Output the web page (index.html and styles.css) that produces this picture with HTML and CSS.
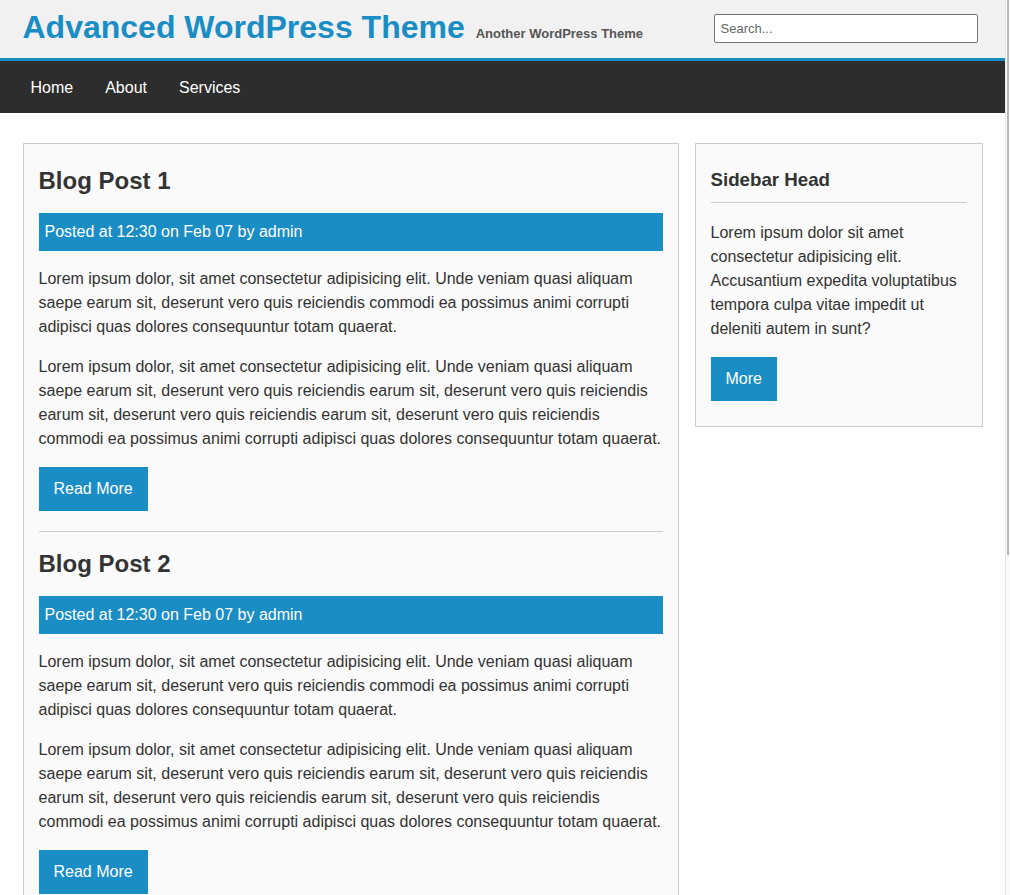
FILE: index.html
```html
<!DOCTYPE html>
<html lang="en">
<head>
<meta charset="utf-8">
<title>Advanced WordPress Theme</title>
<link rel="stylesheet" href="styles.css">
</head>
<body>
<header class="site-header">
  <div class="container header-inner">
    <div class="branding">
      <h1 class="site-title">Advanced WordPress Theme</h1>
      <span class="tagline">Another WordPress Theme</span>
    </div>
    <input class="search" type="text" placeholder="Search...">
  </div>
</header>
<nav class="site-nav">
  <div class="container">
    <ul class="menu">
      <li><a href="#">Home</a></li>
      <li><a href="#">About</a></li>
      <li><a href="#">Services</a></li>
    </ul>
  </div>
</nav>
<div class="container layout">
  <main class="main-box">
    <article class="post">
      <h2 class="post-title">Blog Post 1</h2>
      <div class="meta">Posted at 12:30 on Feb 07 by admin</div>
      <p>Lorem ipsum dolor, sit amet consectetur adipisicing elit. Unde veniam quasi aliquam saepe earum sit, deserunt vero quis reiciendis commodi ea possimus animi corrupti adipisci quas dolores consequuntur totam quaerat.</p>
      <p>Lorem ipsum dolor, sit amet consectetur adipisicing elit. Unde veniam quasi aliquam saepe earum sit, deserunt vero quis reiciendis earum sit, deserunt vero quis reiciendis earum sit, deserunt vero quis reiciendis earum sit, deserunt vero quis reiciendis commodi ea possimus animi corrupti adipisci quas dolores consequuntur totam quaerat.</p>
      <a class="btn" href="#">Read More</a>
    </article>
    <article class="post">
      <h2 class="post-title">Blog Post 2</h2>
      <div class="meta">Posted at 12:30 on Feb 07 by admin</div>
      <p>Lorem ipsum dolor, sit amet consectetur adipisicing elit. Unde veniam quasi aliquam saepe earum sit, deserunt vero quis reiciendis commodi ea possimus animi corrupti adipisci quas dolores consequuntur totam quaerat.</p>
      <p>Lorem ipsum dolor, sit amet consectetur adipisicing elit. Unde veniam quasi aliquam saepe earum sit, deserunt vero quis reiciendis earum sit, deserunt vero quis reiciendis earum sit, deserunt vero quis reiciendis earum sit, deserunt vero quis reiciendis commodi ea possimus animi corrupti adipisci quas dolores consequuntur totam quaerat.</p>
      <a class="btn" href="#">Read More</a>
    </article>
  </main>
  <aside class="sidebar">
    <h3 class="sidebar-head">Sidebar Head</h3>
    <p>Lorem ipsum dolor sit amet consectetur adipisicing elit. Accusantium expedita voluptatibus tempora culpa vitae impedit ut deleniti autem in sunt?</p>
    <a class="btn" href="#">More</a>
  </aside>
</div>
<div class="scroll-thumb"></div>
</body>
</html>
```

FILE: styles.css
```css
* {
  box-sizing: border-box;
}

html {
  background: linear-gradient(to right,
    #fff calc(100% - 5px),
    #e6e6e6 calc(100% - 5px),
    #e6e6e6 calc(100% - 4px),
    #fafafa calc(100% - 4px));
}

body {
  margin: 0 5px 0 0;
  font-family: "Liberation Sans", Arial, sans-serif;
  font-size: 16px;
  line-height: 24px;
  color: #333;
  background: #fff;
}

.scroll-thumb {
  position: fixed;
  top: 0;
  right: 1px;
  width: 2px;
  height: 555px;
  background: #b8b8b8;
}

.container {
  width: 960px;
  margin: 0 auto;
}

.site-header {
  background: #f1f1f1;
  border-bottom: 3px solid #1a8dc5;
}

.header-inner {
  display: flex;
  justify-content: space-between;
  align-items: flex-start;
  height: 58px;
  padding-top: 9px;
}

.branding {
  display: flex;
  align-items: baseline;
  gap: 11px;
}

.site-title {
  margin: 0;
  font-size: 32px;
  line-height: 37px;
  font-weight: bold;
  color: #1a8dc5;
}

.tagline {
  font-size: 13px;
  font-weight: bold;
  color: #555;
}

.search {
  margin: 5px 5px 0 0;
  width: 264px;
  height: 29px;
  border: 1px solid #767676;
  border-radius: 2px;
  padding: 0 6px;
  font-family: "Liberation Sans", Arial, sans-serif;
  font-size: 13px;
  color: #333;
  background: #fff;
}

.search::placeholder {
  color: #666;
}

.site-nav {
  background: #2d2d2d;
  height: 52px;
}

.menu {
  list-style: none;
  margin: 0;
  padding: 2px 0 0 8px;
  display: flex;
  gap: 32px;
  height: 52px;
  align-items: center;
}

.menu a {
  color: #fff;
  text-decoration: none;
  font-size: 16px;
  line-height: 18px;
}

.layout {
  display: flex;
  gap: 16px;
  align-items: flex-start;
  margin-top: 30px;
  padding-bottom: 500px;
}

.main-box {
  width: 656px;
  flex: none;
  background: #fafafa;
  border: 1px solid #ccc;
  padding: 23px 15px 0;
}

.post {
  padding-bottom: 20px;
  border-bottom: 1px solid #ccc;
}

.post + .post {
  padding-top: 18px;
}

.post-title {
  margin: 0 0 18px;
  font-size: 24px;
  line-height: 28px;
  font-weight: bold;
  color: #333;
}

.meta {
  background: #1a8dc5;
  color: #fff;
  height: 38px;
  line-height: 38px;
  padding-left: 6px;
  font-size: 16px;
}

.post p,
.sidebar p {
  margin: 16px 0;
}

.btn {
  display: inline-block;
  background: #1a8dc5;
  color: #fff;
  text-decoration: none;
  font-size: 16px;
  line-height: 18px;
  padding: 13px 15px;
  vertical-align: top;
}

.sidebar {
  width: 288px;
  flex: none;
  background: #fafafa;
  border: 1px solid #ccc;
  padding: 25px 15px 25px;
}

.sidebar-head {
  margin: 0;
  font-size: 18.72px;
  line-height: 22px;
  font-weight: bold;
  color: #333;
  padding-bottom: 11px;
  border-bottom: 1px solid #ccc;
}

.sidebar p {
  margin-top: 18px;
}
```
